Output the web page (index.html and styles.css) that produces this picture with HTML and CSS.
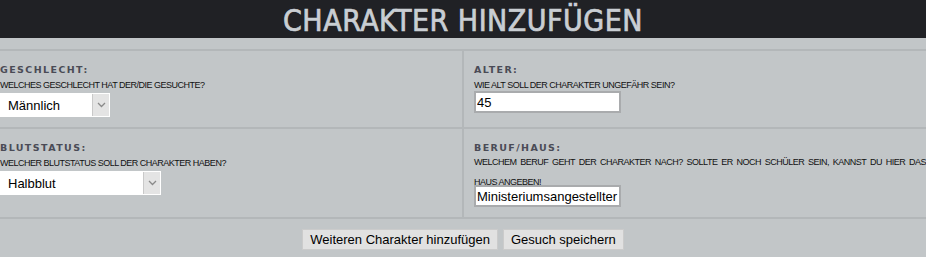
FILE: index.html
```html
<!DOCTYPE html>
<html lang="de">
<head>
    <meta charset="UTF-8">
    <meta name="viewport" content="width=device-width, initial-scale=1.0">
    <title>Charakter hinzufügen</title>
    <link rel="stylesheet" href="styles.css">
</head>
<body>
    <div class="header">
        <h1>Charakter hinzufügen</h1>
    </div>

    <form class="search-form">
        <div class="fields">
            <div class="field">
                <div class="label">Geschlecht:</div>
                <div class="hint">Welches Geschlecht hat der/die Gesuchte?</div>
                <div class="select select-small">
                    <select name="gender">
                        <option>Männlich</option>
                        <option>Weiblich</option>
                    </select>
                    <span class="arrow"><svg width="9" height="6" viewBox="0 0 9 6"><path d="M1 1 L4.5 4.5 L8 1" fill="none" stroke="#8a8a8a" stroke-width="1.3"/></svg></span>
                </div>
            </div>

            <div class="field">
                <div class="label">Alter:</div>
                <div class="hint">Wie alt soll der Charakter ungefähr sein?</div>
                <input type="text" name="age" value="45">
            </div>

            <div class="field">
                <div class="label">Blutstatus:</div>
                <div class="hint">Welcher Blutstatus soll der Charakter haben?</div>
                <div class="select select-wide">
                    <select name="blood">
                        <option>Halbblut</option>
                        <option>Reinblut</option>
                        <option>Muggelstämmig</option>
                    </select>
                    <span class="arrow"><svg width="9" height="6" viewBox="0 0 9 6"><path d="M1 1 L4.5 4.5 L8 1" fill="none" stroke="#8a8a8a" stroke-width="1.3"/></svg></span>
                </div>
            </div>

            <div class="field">
                <div class="label">Beruf/Haus:</div>
                <div class="hint hint-long">Welchem Beruf geht der Charakter nach? Sollte er noch Schüler sein, kannst du hier das Haus angeben!</div>
                <input type="text" name="job" value="Ministeriumsangestellter">
            </div>
        </div>

        <div class="actions">
            <button type="button">Weiteren Charakter hinzufügen</button>
            <button type="submit">Gesuch speichern</button>
        </div>
    </form>
</body>
</html>
```

FILE: styles.css
```css
body {
    margin: 0;
    background-color: #c2c6c8;
    font-family: "Liberation Sans", Arial, sans-serif;
}
.header {
    height: 38px;
    box-sizing: border-box;
    padding-top: 4px;
    background-color: #202125;
    text-align: center;
}
.header h1 {
    margin: 0;
    font-family: "DejaVu Sans Condensed", "DejaVu Sans", sans-serif;
    font-stretch: condensed;
    font-weight: normal;
    font-size: 30px;
    line-height: 34px;
    letter-spacing: 0.5px;
    color: #c9ced3;
    text-transform: uppercase;
    -webkit-text-stroke: 0.7px #c9ced3;
}
.search-form {
    padding-top: 11px;
}
.fields {
    display: grid;
    grid-template-columns: 464px 1fr;
    border-top: 2px solid #b3b7b9;
}
.field {
    box-sizing: border-box;
    padding: 13px 0 10px 10px;
    border-bottom: 2px solid #b3b7b9;
}
.field:nth-child(odd) {
    padding-left: 0;
    border-right: 2px solid #b3b7b9;
}
.label {
    font-family: "DejaVu Sans", Verdana, sans-serif;
    font-weight: bold;
    font-size: 9.5px;
    line-height: 12px;
    letter-spacing: 1.4px;
    color: #4a4b56;
    text-transform: uppercase;
}
.hint {
    margin-top: 3px;
    font-size: 9px;
    line-height: 12px;
    letter-spacing: -0.5px;
    color: #111;
    text-transform: uppercase;
}
.hint-long {
    margin-top: -2px;
    margin-bottom: -7px;
    line-height: 20px;
    text-align: justify;
}
.select {
    display: flex;
    height: 24px;
    margin-top: 2px;
    background: #fff;
}
.select-small {
    width: 110px;
}
.select-wide {
    width: 161px;
}
.select select {
    flex: 1;
    min-width: 0;
    appearance: none;
    -webkit-appearance: none;
    border: none;
    background: transparent;
    padding: 0 0 0 8px;
    font-family: "Liberation Sans", Arial, sans-serif;
    font-size: 13px;
    color: #000;
    outline: none;
}
.arrow {
    display: flex;
    align-items: center;
    justify-content: center;
    width: 16px;
    margin: 1px 1px 1px 0;
    background: #e4e4e4;
    border-left: 1px solid #c9c9c9;
}
input[type="text"] {
    display: block;
    box-sizing: border-box;
    width: 147px;
    height: 22px;
    margin: 0;
    padding: 0 1px;
    border: 2px solid #a9abad;
    background: #fff;
    font-family: "Liberation Sans", Arial, sans-serif;
    font-size: 13px;
    color: #000;
}
.actions {
    display: flex;
    justify-content: center;
    gap: 5px;
    padding-top: 10px;
}
.actions button {
    height: 21px;
    padding: 0 7px;
    background-color: #e1e1e1;
    border: 1px solid #cbcbcb;
    font-family: "Liberation Sans", Arial, sans-serif;
    font-size: 13px;
    color: #000;
    cursor: pointer;
}
.actions button:hover {
    background-color: #d6d6d6;
}
```
